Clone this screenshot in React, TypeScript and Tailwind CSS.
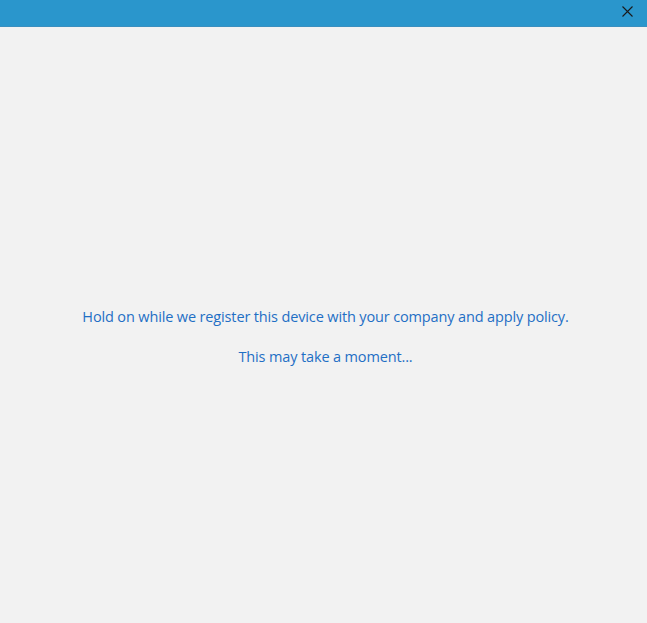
export default function App() {
  return (
    <div className="flex h-[623px] w-[647px] flex-col bg-[#f2f2f2] font-['Segoe_UI','Open_Sans',sans-serif]">
      {/* title bar with close glyph */}
      <div className="flex h-[27px] shrink-0 items-start justify-end border-b border-[#3a8fbf] bg-[#2a96cc]">
        <button className="flex h-[22px] w-[40px] items-center justify-center">
          <svg width="11" height="11" viewBox="0 0 11 11" fill="none" stroke="#1a1a1a" strokeWidth="1.1">
            <path d="M0.5 0.5 L10.5 10.5 M10.5 0.5 L0.5 10.5" />
          </svg>
        </button>
      </div>
      <div className="flex flex-1 flex-col items-center pl-[4px] pt-[280px] text-[14.5px] text-[#1f6fc5]">
        <p className="leading-[20px] tracking-[-0.14px]">Hold on while we register this device with your company and apply policy.</p>
        <p className="mt-[20px] leading-[20px] tracking-[-0.14px]">This may take a moment...</p>
      </div>
    </div>
  )
}
